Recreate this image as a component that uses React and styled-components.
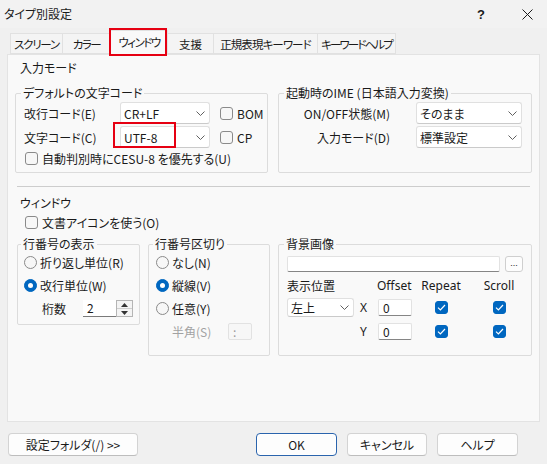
import React from "react";
import styled, { createGlobalStyle } from "styled-components";

const Global = createGlobalStyle`
  html, body { margin: 0; padding: 0; background: #f0f0f0; }
  body {
    font-family: "Noto Sans CJK JP", "Noto Sans", sans-serif;
    font-size: 12px;
    color: #1a1a1a;
    font-feature-settings: "palt" 1;
  }
  * { box-sizing: border-box; }
`;

const Window = styled.div`
  width: 547px;
  height: 464px;
  display: flex;
  flex-direction: column;
  background: #f0f0f0;
  overflow: hidden;
`;

const TitleBar = styled.div`
  height: 28px;
  display: flex;
  align-items: center;
  padding-left: 4px;
  background: #f2f2f2;
`;

const Title = styled.div`
  font-size: 12px;
  line-height: 16px;
  flex: 1;
`;

const TitleButton = styled.div`
  width: ${(p) => p.$w}px;
  height: 28px;
  display: flex;
  align-items: center;
  justify-content: center;
  font-family: "Liberation Sans", sans-serif;
  font-weight: bold;
  font-size: 13px;
`;

const TabRow = styled.div`
  height: 26px;
  display: flex;
  align-items: flex-end;
  padding-left: 10px;
`;

const Tab = styled.div`
  position: relative;
  flex: none;
  width: ${(p) => p.$w}px;
  height: ${(p) => (p.$active ? 25 : 21)}px;
  margin-left: ${(p) => (p.$first ? 0 : -1)}px;
  margin-bottom: ${(p) => (p.$active ? -1 : 0)}px;
  display: flex;
  align-items: center;
  justify-content: center;
  background: ${(p) => (p.$active ? "#f9f9f9" : "#f4f4f4")};
  border: 1px solid #e1e1e1;
  border-bottom: ${(p) => (p.$active ? "none" : "1px solid #e1e1e1")};
  line-height: 14px;
  font-size: 11.5px;
  white-space: nowrap;
  letter-spacing: ${(p) => p.$ls}px;
  z-index: ${(p) => (p.$active ? 2 : 1)};
  padding-bottom: ${(p) => (p.$active ? 2 : 0)}px;
`;

const Highlight = styled.span`
  position: absolute;
  left: ${(p) => p.$l}px;
  top: ${(p) => p.$t}px;
  width: ${(p) => p.$w}px;
  height: ${(p) => p.$h}px;
  border: 2px solid #e60012;
  pointer-events: none;
  z-index: 5;
`;

const Panel = styled.div`
  flex: 0 0 368px;
  margin: 0 7px;
  background: #f9f9f9;
  border: 1px solid #e3e3e3;
  padding: 5px 7px 0;
`;

const SectionTitle = styled.div`
  margin: ${(p) => p.$mt || 0}px 0 0 5px;
  line-height: 16px;
`;

const TopGrid = styled.div`
  margin-top: 10px;
  display: grid;
  grid-template-columns: 253px 254px;
  column-gap: 10px;
`;

const Group = styled.fieldset`
  margin: 0;
  min-width: 0;
  border: 1px solid #dcdcdc;
  border-radius: 2px;
  padding: ${(p) => p.$pad};
  height: ${(p) => (p.$h ? `${p.$h}px` : "auto")};
`;

const Legend = styled.legend`
  padding: 0 2px;
  margin-left: -3px;
  line-height: 14px;
  font-size: 12px;
`;

const CodeGrid = styled.div`
  margin-top: 2px;
  display: grid;
  grid-template-columns: 86px 90px auto;
  grid-auto-rows: 22px;
  row-gap: 2px;
  column-gap: 10px;
  align-items: center;
`;

const ImeGrid = styled.div`
  margin-top: 2px;
  display: grid;
  grid-template-columns: 103px 106px;
  grid-auto-rows: 22px;
  row-gap: 2px;
  column-gap: 26px;
  align-items: center;
`;

const Label = styled.span`
  text-align: ${(p) => p.$align || "left"};
  white-space: nowrap;
  color: ${(p) => (p.$disabled ? "#a2a2a2" : "inherit")};
  width: ${(p) => (p.$w ? `${p.$w}px` : "auto")};
  flex: none;
`;

const Combo = styled.div`
  position: relative;
  width: ${(p) => p.$w}px;
  height: ${(p) => p.$h || 22}px;
  display: flex;
  align-items: center;
  justify-content: space-between;
  padding: 0 4px 0 3px;
  background: #fff;
  border: 1px solid #e0e0e0;
  border-bottom-color: #cacaca;
  border-radius: 3px;
  white-space: nowrap;
`;

const CheckLine = styled.label`
  display: flex;
  align-items: center;
  gap: 4px;
  height: ${(p) => p.$h || 18}px;
  margin: ${(p) => p.$m || "0"};
  white-space: nowrap;
`;

const Box = styled.span`
  width: 13px;
  height: 13px;
  flex: none;
  border-radius: 3px;
  border: 1px solid ${(p) => (p.$on ? "#0067c0" : "#8a8a8a")};
  background: ${(p) => (p.$on ? "#0067c0" : "#f7f7f7")};
  display: flex;
  align-items: center;
  justify-content: center;
`;

const Circle = styled.span`
  width: 13px;
  height: 13px;
  flex: none;
  border-radius: 50%;
  border: 1px solid ${(p) => (p.$on ? "#0067c0" : "#8a8a8a")};
  background: ${(p) => (p.$on ? "#0067c0" : "#f7f7f7")};
  display: flex;
  align-items: center;
  justify-content: center;
  &::after {
    content: "";
    display: ${(p) => (p.$on ? "block" : "none")};
    width: 5px;
    height: 5px;
    border-radius: 50%;
    background: #fff;
  }
`;

const Separator = styled.div`
  margin: 13px 2px 0;
  height: 1px;
  background: #cdcdcd;
`;

const BottomGrid = styled.div`
  margin: 7px 0 0 2px;
  display: grid;
  grid-template-columns: 123px 122px 254px;
  column-gap: 8px;
  align-items: start;
`;

const OptionRow = styled.div`
  height: 23px;
  display: flex;
  align-items: center;
  gap: 3px;
  padding-left: ${(p) => p.$indent || 0}px;
  white-space: nowrap;
`;

const Spinner = styled.div`
  width: 52px;
  height: 17px;
  display: flex;
`;

const SpinField = styled.div`
  flex: 1;
  background: #fff;
  border-bottom: 1px solid #7a7a7a;
  padding-left: 4px;
  line-height: 16px;
`;

const SpinButtons = styled.div`
  width: 17px;
  display: flex;
  flex-direction: column;
  border: 1px solid #b5b5b5;
  background: #f4f4f4;
`;

const SpinHalf = styled.div`
  flex: 1;
  display: flex;
  align-items: center;
  justify-content: center;
  border-top: ${(p) => (p.$lower ? "1px solid #cfcfcf" : "none")};
`;

const SmallField = styled.div`
  width: ${(p) => p.$w}px;
  height: ${(p) => p.$h}px;
  flex: none;
  background: ${(p) => (p.$disabled ? "#f7f7f7" : "#fff")};
  border: 1px solid #e2e2e2;
  border-bottom-color: ${(p) => (p.$disabled ? "#e2e2e2" : "#858585")};
  border-radius: 2px;
  padding-left: 4px;
  line-height: ${(p) => p.$h - 2}px;
  color: ${(p) => (p.$disabled ? "#9a9a9a" : "inherit")};
  font-size: 12px;
`;

const FileRow = styled.div`
  margin-top: 5px;
  display: flex;
  align-items: center;
  gap: 5px;
`;

const BrowseButton = styled.div`
  width: 18px;
  height: 16px;
  border: 1px solid #cfcfcf;
  border-radius: 3px;
  background: #fdfdfd;
  font-size: 9px;
  line-height: 12px;
  text-align: center;
  font-family: "Liberation Sans", sans-serif;
`;

const PosGrid = styled.div`
  margin-top: 5px;
  display: grid;
  grid-template-columns: 67px 24px 34px 58px 58px;
  grid-template-rows: 16px 20px 20px;
  row-gap: 4px;
  align-items: center;
`;

const HeadCell = styled.span`
  text-align: ${(p) => (p.$center ? "center" : "left")};
  white-space: nowrap;
  font-family: ${(p) => (p.$latin ? '"Noto Sans", sans-serif' : "inherit")};
  font-size: 12px;
  margin-left: ${(p) => p.$ml || 0}px;
`;

const CenterCell = styled.div`
  display: flex;
  justify-content: center;
`;

const AxisLabel = styled.span`
  padding-left: 6px;
  font-family: "Noto Sans", sans-serif;
`;

const Footer = styled.div`
  display: flex;
  align-items: flex-start;
  padding: 11px 29px 0 8px;
`;

const ButtonGroup = styled.div`
  margin-left: auto;
  display: flex;
  gap: 10px;
`;

const Button = styled.div`
  width: ${(p) => p.$w}px;
  height: 23px;
  display: flex;
  align-items: center;
  justify-content: center;
  background: #fdfdfd;
  border: 1px solid ${(p) => (p.$default ? "#2a64ad" : "#d3d3d3")};
  border-bottom-color: ${(p) => (p.$default ? "#2a64ad" : "#bdbdbd")};
  box-shadow: ${(p) => (p.$default ? "inset 0 0 0 1px #ffffff" : "none")};
  border-radius: 4px;
  white-space: nowrap;
`;

const Chevron = () => (
  <svg width="9" height="5" viewBox="0 0 9 5">
    <path d="M0.5 0.5 L4.5 4.5 L8.5 0.5" fill="none" stroke="#606060" strokeWidth="1" />
  </svg>
);

const CheckMark = () => (
  <svg width="9" height="7" viewBox="0 0 9 7">
    <path d="M1 3.6 L3.4 6 L8 1" fill="none" stroke="#fff" strokeWidth="1.2" />
  </svg>
);

const Arrow = ({ up }) => (
  <svg width="7" height="4" viewBox="0 0 7 4">
    <path d={up ? "M0 4 L3.5 0 L7 4 Z" : "M0 0 L3.5 4 L7 0 Z"} fill="#333" />
  </svg>
);

const Check = ({ on, children, h, m }) => (
  <CheckLine $h={h} $m={m}>
    <Box $on={on}>{on && <CheckMark />}</Box>
    {children}
  </CheckLine>
);

const Select = ({ w, h, children, mark }) => (
  <Combo $w={w} $h={h}>
    <span>{children}</span>
    <Chevron />
    {mark}
  </Combo>
);

const tabs = [
  { label: "スクリーン", w: 53, ls: -1.2 },
  { label: "カラー", w: 49, ls: -1.5 },
  { label: "ウィンドウ", w: 58, ls: -1.5, active: true },
  { label: "支援", w: 47, ls: 0 },
  { label: "正規表現キーワード", w: 105, ls: -0.9 },
  { label: "キーワードヘルプ", w: 79, ls: -1.9 },
];

export default function App() {
  return (
    <>
      <Global />
      <Window>
        <TitleBar>
          <Title>タイプ別設定</Title>
          <TitleButton $w={52}>?</TitleButton>
          <TitleButton $w={40}>
            <svg width="11" height="11" viewBox="0 0 11 11">
              <path d="M0.5 0.5 L10.5 10.5 M10.5 0.5 L0.5 10.5" stroke="#1a1a1a" strokeWidth="1" />
            </svg>
          </TitleButton>
        </TitleBar>

        <TabRow>
          {tabs.map((t, i) => (
            <Tab key={t.label} $w={t.w} $ls={t.ls} $active={t.active} $first={i === 0}>
              {t.label}
              {t.active && <Highlight $l={-2} $t={-3} $w={58} $h={28} />}
            </Tab>
          ))}
        </TabRow>

        <Panel>
          <SectionTitle>入力モード</SectionTitle>
          <TopGrid>
            <Group $pad="0 8px 5px">
              <Legend>デフォルトの文字コード</Legend>
              <CodeGrid>
                <Label>改行コード(E)</Label>
                <Select w={90}>CR+LF</Select>
                <Check>BOM</Check>
                <Label>文字コード(C)</Label>
                <Select w={90} mark={<Highlight $l={-8} $t={-5} $w={63} $h={26} />}>
                  UTF-8
                </Select>
                <Check>CP</Check>
              </CodeGrid>
              <Check m="1px 0 0 1px">自動判別時にCESU-8 を優先する(U)</Check>
            </Group>

            <Group $pad="0 8px 5px">
              <Legend>起動時のIME (日本語入力変換)</Legend>
              <ImeGrid>
                <Label $align="right">ON/OFF状態(M)</Label>
                <Select w={106}>そのまま</Select>
                <Label $align="right">入力モード(D)</Label>
                <Select w={106}>標準設定</Select>
              </ImeGrid>
            </Group>
          </TopGrid>

          <Separator />

          <SectionTitle $mt={8}>ウィンドウ</SectionTitle>
          <Check h={16} m="3px 0 0 10px">文書アイコンを使う(O)</Check>

          <BottomGrid>
            <Group $pad="0 6px 4px">
              <Legend>行番号の表示</Legend>
              <OptionRow>
                <Circle />
                折り返し単位(R)
              </OptionRow>
              <OptionRow>
                <Circle $on />
                改行単位(W)
              </OptionRow>
              <OptionRow $indent={18}>
                <Label $w={38}>桁数</Label>
                <Spinner>
                  <SpinField>2</SpinField>
                  <SpinButtons>
                    <SpinHalf>
                      <Arrow up />
                    </SpinHalf>
                    <SpinHalf $lower>
                      <Arrow />
                    </SpinHalf>
                  </SpinButtons>
                </Spinner>
              </OptionRow>
            </Group>

            <Group $pad="0 7px 0" $h={119}>
              <Legend>行番号区切り</Legend>
              <OptionRow>
                <Circle />
                なし(N)
              </OptionRow>
              <OptionRow>
                <Circle $on />
                縦線(V)
              </OptionRow>
              <OptionRow>
                <Circle />
                任意(Y)
              </OptionRow>
              <OptionRow $indent={16}>
                <Label $w={53} $disabled>
                  半角(S)
                </Label>
                <SmallField $w={24} $h={17} $disabled>
                  :
                </SmallField>
              </OptionRow>
            </Group>

            <Group $pad="0 8px 0" $h={119}>
              <Legend>背景画像</Legend>
              <FileRow>
                <SmallField $w={213} $h={16} />
                <BrowseButton>...</BrowseButton>
              </FileRow>
              <PosGrid>
                <HeadCell>表示位置</HeadCell>
                <span />
                <HeadCell $latin $ml={-1}>Offset</HeadCell>
                <HeadCell $latin $center>Repeat</HeadCell>
                <HeadCell $latin $center>Scroll</HeadCell>

                <Select w={67} h={19}>左上</Select>
                <AxisLabel>X</AxisLabel>
                <SmallField $w={34} $h={17}>0</SmallField>
                <CenterCell>
                  <Box $on>
                    <CheckMark />
                  </Box>
                </CenterCell>
                <CenterCell>
                  <Box $on>
                    <CheckMark />
                  </Box>
                </CenterCell>

                <span />
                <AxisLabel>Y</AxisLabel>
                <SmallField $w={34} $h={17}>0</SmallField>
                <CenterCell>
                  <Box $on>
                    <CheckMark />
                  </Box>
                </CenterCell>
                <CenterCell>
                  <Box $on>
                    <CheckMark />
                  </Box>
                </CenterCell>
              </PosGrid>
            </Group>
          </BottomGrid>
        </Panel>

        <Footer>
          <Button $w={130}>設定フォルダ(/) &gt;&gt;</Button>
          <ButtonGroup>
            <Button $w={81} $default>
              OK
            </Button>
            <Button $w={80}>キャンセル</Button>
            <Button $w={81}>ヘルプ</Button>
          </ButtonGroup>
        </Footer>
      </Window>
    </>
  );
}
